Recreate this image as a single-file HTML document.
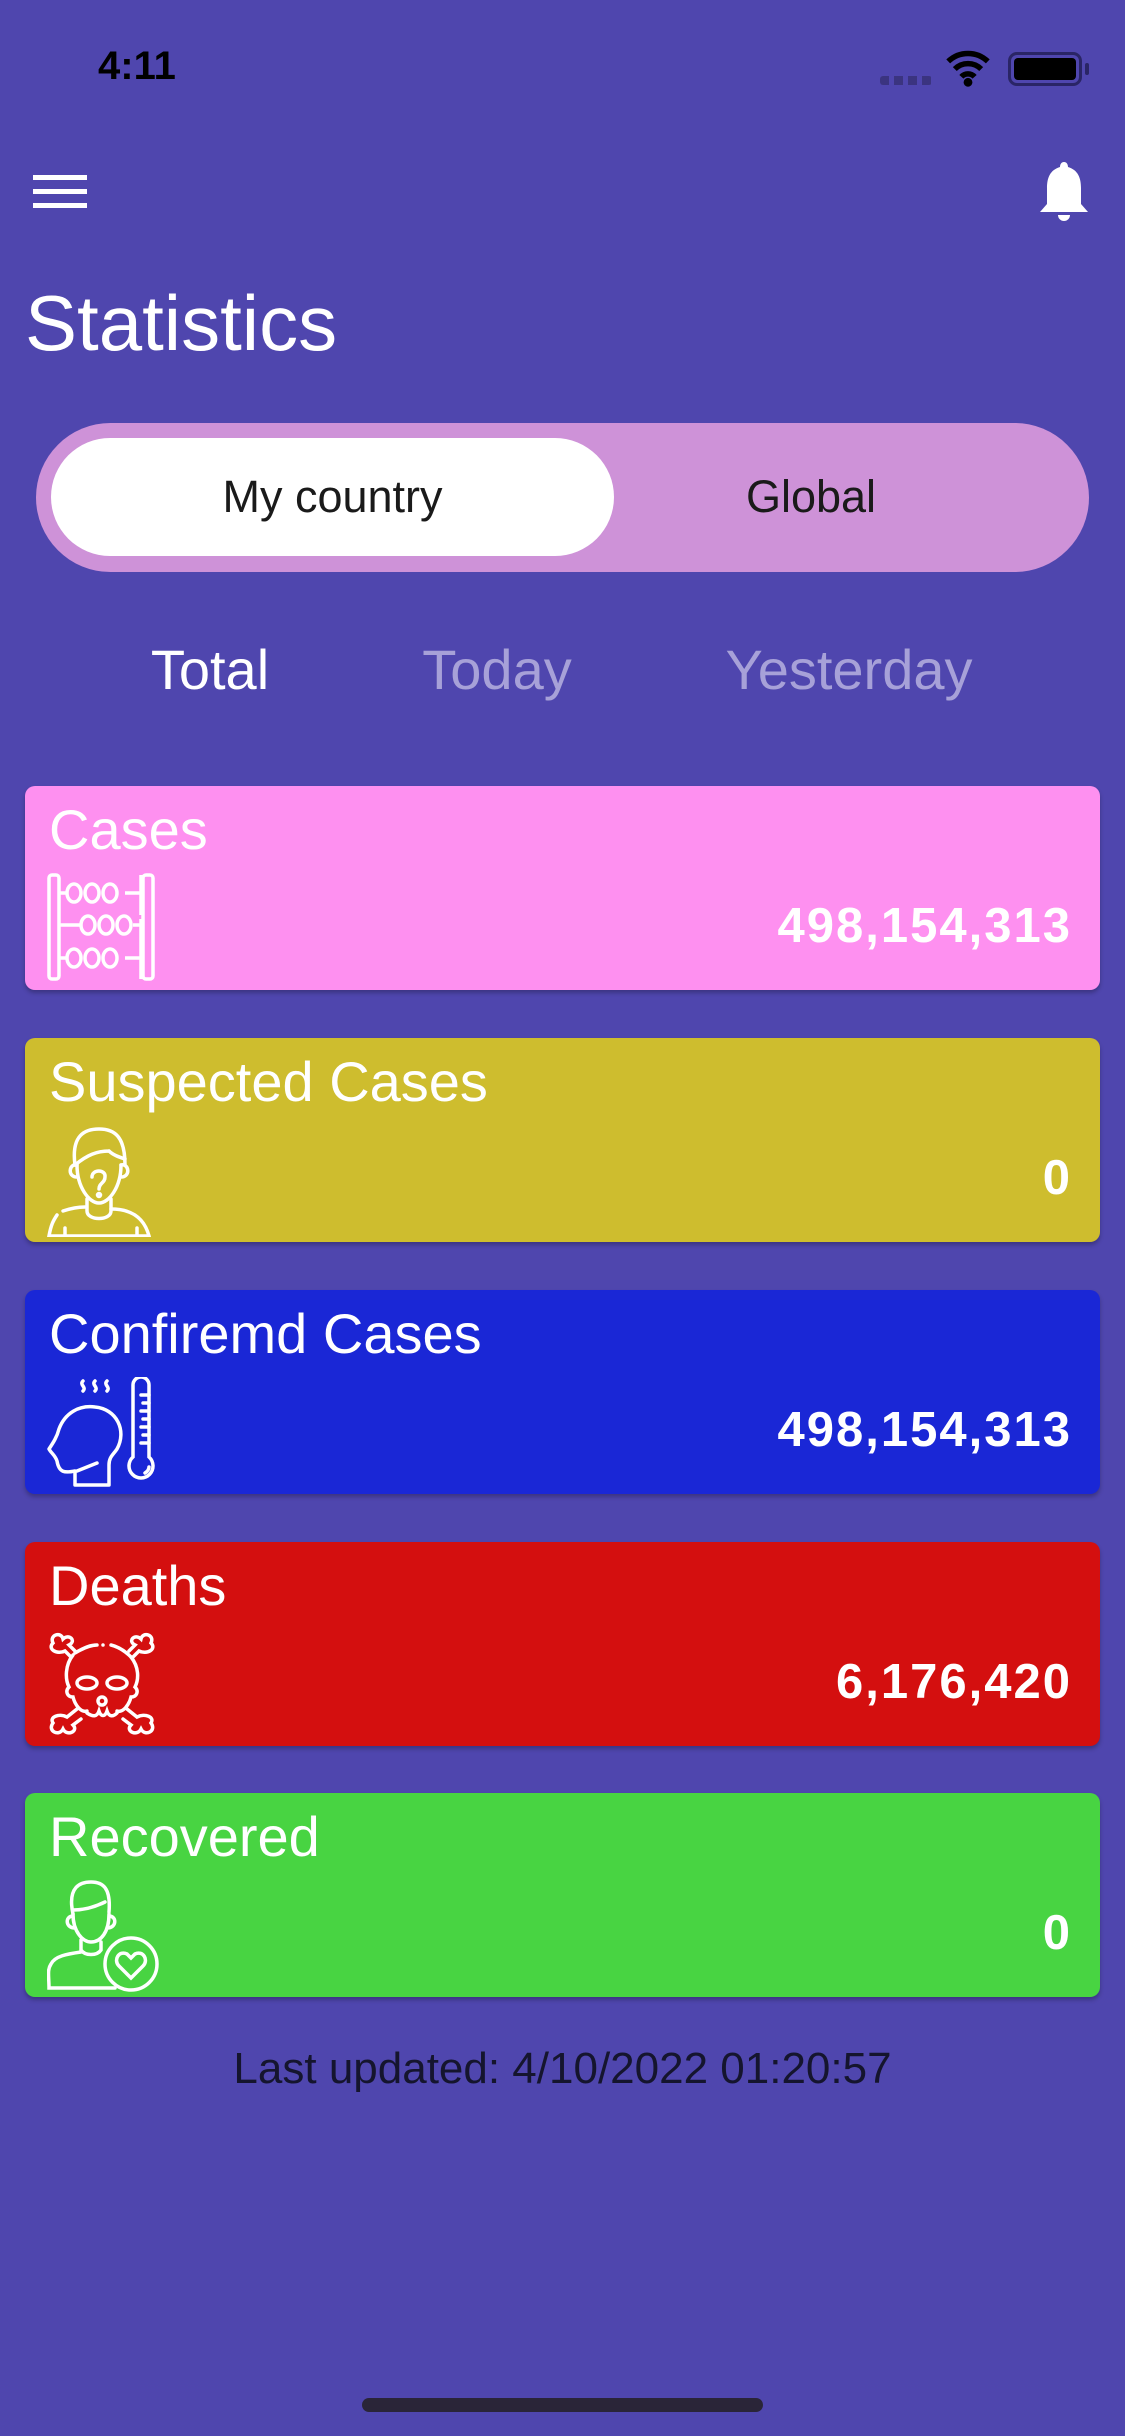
<!DOCTYPE html>
<html><head><meta charset="utf-8"><style>
*{margin:0;padding:0;box-sizing:border-box}
body{width:1125px;height:2436px;background:#4f46ae;font-family:"Liberation Sans",sans-serif;position:relative;overflow:hidden;color:#fff}
.a{position:absolute}
.card{position:absolute;left:25px;width:1075px;height:204px;border-radius:10px;box-shadow:0 3px 4px rgba(0,0,0,.25)}
.card .t{position:absolute;left:24px;top:12px;font-size:56px;line-height:64px}
.card .n{position:absolute;right:28px;top:112px;font-size:49px;line-height:56px;font-weight:bold;letter-spacing:2px}
.card svg{position:absolute;left:22px;top:87px}
.tab{position:absolute;top:637px;font-size:56px;line-height:66px;transform:translateX(-50%)}
</style></head><body>
<div class="a" style="left:98px;top:44px;font-size:40px;font-weight:bold;color:#000">4:11</div>
<div class="a" style="left:880px;top:76px;width:52px;height:9px;background:repeating-linear-gradient(90deg,#3b3480 0 9px,transparent 9px 14px);border-radius:3px"></div>
<svg class="a" style="left:946px;top:48px" width="44" height="40" viewBox="0 0 40 36"><path d="M2 12 A26 26 0 0 1 38 12 M8 19 A17 17 0 0 1 32 19 M14 26 A8 8 0 0 1 26 26" stroke="#000" stroke-width="5" fill="none"/><circle cx="20" cy="31" r="4" fill="#000"/></svg>
<div class="a" style="left:1008px;top:52px;width:74px;height:34px;border:3px solid #2a2566;border-radius:9px;padding:3px"><div style="background:#000;width:100%;height:100%;border-radius:4px"></div></div>
<div class="a" style="left:1085px;top:63px;width:4px;height:12px;background:#2a2566;border-radius:2px"></div>
<div class="a" style="left:33px;top:175px;width:54px;height:5px;background:#fff"></div>
<div class="a" style="left:33px;top:189px;width:54px;height:5px;background:#fff"></div>
<div class="a" style="left:33px;top:203px;width:54px;height:5px;background:#fff"></div>
<svg class="a" style="left:1038px;top:160px" width="52" height="66" viewBox="0 0 52 66"><path d="M26 2 C23 2 22 5 22 7 C12 10 9 18 9 28 L9 44 L2 52 L50 52 L43 44 L43 28 C43 18 40 10 30 7 C30 5 29 2 26 2Z" fill="#fff"/><path d="M20 55 A6 6 0 0 0 32 55Z" fill="#fff"/></svg>
<div class="a" style="left:25px;top:278px;font-size:78px;line-height:90px">Statistics</div>
<div class="a" style="left:36px;top:423px;width:1053px;height:149px;border-radius:75px;background:#ce92d8"></div>
<div class="a" style="left:51px;top:438px;width:563px;height:118px;border-radius:59px;background:#fff"></div>
<div class="a" style="left:51px;top:471px;width:563px;text-align:center;font-size:45px;line-height:52px;color:#1a1a1a">My country</div>
<div class="a" style="left:614px;top:471px;width:394px;text-align:center;font-size:45px;line-height:52px;color:#1a1a1a">Global</div>
<div class="tab" style="left:210px;color:#fff">Total</div>
<div class="tab" style="left:497px;color:#a7a1d8">Today</div>
<div class="tab" style="left:849px;color:#a7a1d8">Yesterday</div>

<div class="card" style="top:786px;background:#fe90f0"><div class="t">Cases</div><div class="n">498,154,313</div>
<svg width="110" height="110" viewBox="0 0 110 110" fill="none" stroke="#fff" stroke-width="3.5"><rect x="2" y="2" width="10" height="104" rx="3"/><rect x="96" y="2" width="10" height="104" rx="3"/><path d="M12 20h8M40 20h0M78 20h16M12 52h22M86 52h8M12 85h8M78 85h16M94 2v40M94 46v60"/><ellipse cx="27" cy="20" rx="7" ry="9"/><ellipse cx="45" cy="20" rx="7" ry="9"/><ellipse cx="63" cy="20" rx="7" ry="9"/><ellipse cx="41" cy="52" rx="7" ry="9"/><ellipse cx="59" cy="52" rx="7" ry="9"/><ellipse cx="77" cy="52" rx="7" ry="9"/><ellipse cx="27" cy="85" rx="7" ry="9"/><ellipse cx="45" cy="85" rx="7" ry="9"/><ellipse cx="63" cy="85" rx="7" ry="9"/></svg></div>

<div class="card" style="top:1038px;background:#cebd2e"><div class="t">Suspected Cases</div><div class="n">0</div>
<svg width="112" height="112" viewBox="0 0 112 112" fill="none" stroke="#fff" stroke-width="3.5" stroke-linecap="round"><path d="M28 40 C24 10 38 4 52 4 C68 4 78 12 78 40"/><path d="M28 40 C40 30 50 26 62 26 M62 26 C66 30 72 32 78 34"/><path d="M30 40 C30 62 42 78 52 78 C62 78 74 62 74 40"/><path d="M30 40 C22 38 20 52 30 52 M74 40 C82 38 84 52 74 52"/><path d="M45 52 C45 44 59 44 58 52 C58 58 52 58 52 64"/><circle cx="52" cy="70" r="1.5"/><path d="M40 74 V86 C40 96 64 96 64 86 V74"/><path d="M64 84 C88 84 98 96 102 111 H2 C4 100 6 96 10 90 M16 86 C22 84 30 82 38 82"/><path d="M18 103 V110 M90 103 V110"/></svg></div>

<div class="card" style="top:1290px;background:#1a27d6"><div class="t">Confiremd Cases</div><div class="n">498,154,313</div>
<svg width="112" height="112" viewBox="0 0 112 112" fill="none" stroke="#fff" stroke-width="3.5" stroke-linecap="round"><path d="M28 108 V94 C18 96 12 96 10 84 C8 78 4 76 2 72 C6 66 10 60 12 52 C18 36 32 28 48 30 C70 32 80 54 70 72 C66 78 62 80 62 88 V108 Z" stroke-linejoin="round"/><path d="M30 94 L50 86"/><path d="M36 4 c-4 4 4 6 0 10 M48 4 c-4 4 4 6 0 10 M60 4 c-4 4 4 6 0 10"/><path d="M86 80 V8 a8 8 0 0 1 16 0 V80 a12 12 0 1 1 -16 0Z"/><path d="M94 18h8M96 26h6M94 34h8M96 42h6M94 50h8M96 58h6M94 66h8M98 96 c3 -2 4 -4 4 -6"/></svg></div>

<div class="card" style="top:1542px;background:#d40f0f"><div class="t">Deaths</div><div class="n">6,176,420</div>
<svg width="112" height="112" viewBox="0 0 112 112" fill="none" stroke="#fff" stroke-width="3.5" stroke-linecap="round"><path d="M28 24 C38 18 44 16 50 16 M64 16 C72 18 78 22 84 28 M56 16h0"/><path d="M26 26 C18 36 18 50 22 58 C18 62 20 68 26 68 C28 76 34 84 40 82 M84 28 C92 38 92 50 88 58 C92 62 90 68 84 68 C82 76 76 84 70 82"/><ellipse cx="40" cy="54" rx="10" ry="6"/><ellipse cx="70" cy="54" rx="10" ry="6"/><ellipse cx="55" cy="72" rx="4" ry="4"/><path d="M40 84 C46 88 50 88 52 82 C54 88 58 88 60 82 C62 88 66 88 70 84"/><path d="M24 28 L18 22 C10 26 0 20 6 14 C2 6 14 2 16 10 C22 4 30 12 22 16 L28 22 M86 28 L92 22 C100 26 110 20 104 14 C108 6 96 2 94 10 C88 4 80 12 88 16 L82 22 M30 80 L20 88 C12 84 2 88 6 94 C0 102 12 108 16 100 C20 108 32 102 26 96 L34 90 M80 80 L90 88 C98 84 108 88 104 94 C110 102 98 108 94 100 C90 108 78 102 84 96 L76 90"/></svg></div>

<div class="card" style="top:1793px;background:#48d442"><div class="t">Recovered</div><div class="n">0</div>
<svg width="116" height="112" viewBox="0 0 116 112" fill="none" stroke="#fff" stroke-width="3.5" stroke-linecap="round"><path d="M26 34 C20 6 34 2 44 2 C56 2 64 8 62 32"/><path d="M26 30 C36 30 46 28 58 22"/><path d="M26 34 C26 52 36 62 44 62 C54 62 62 52 62 34 M26 36 C18 36 18 48 28 48 M62 36 C70 36 70 48 60 48"/><path d="M34 60 V70 C38 76 50 76 54 70 V62"/><path d="M34 72 C20 74 8 76 4 84 C0 90 2 96 2 108 H68"/><circle cx="84" cy="84" r="26"/><path d="M84 98 L72 86 C66 80 72 70 80 74 L84 78 L88 74 C96 70 102 80 96 86 Z"/></svg></div>

<div class="a" style="left:0;top:2044px;width:1125px;text-align:center;font-size:44px;line-height:50px;color:#15152e">Last updated: 4/10/2022 01:20:57</div>
<div class="a" style="left:362px;top:2398px;width:401px;height:14px;border-radius:7px;background:#2a2538"></div>
</body></html>
